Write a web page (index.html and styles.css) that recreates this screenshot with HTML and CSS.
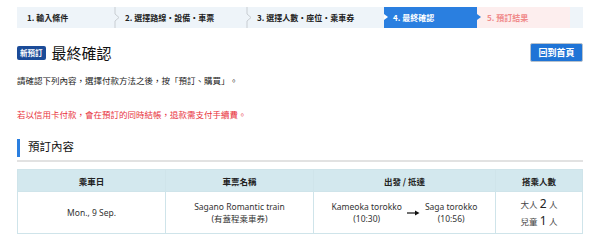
FILE: index.html
```html
<!DOCTYPE html>
<html lang="zh-Hant">
<head>
    <meta charset="UTF-8">
    <title>最終確認</title>
    <link rel="stylesheet" href="styles.css">
</head>
<body>

<div class="page">
    <ol class="steps">
        <li class="step">1. 輸入條件</li>
        <li class="step step-sep">
            <svg class="sep" width="6" height="21" viewBox="0 0 6 21"><path d="M1 0 V7 L5 10.5 L1 14 V21" fill="none" stroke="#c8cdd2" stroke-width="1"/></svg>
            2. 選擇路線・設備・車票
        </li>
        <li class="step step-sep">
            <svg class="sep" width="6" height="21" viewBox="0 0 6 21"><path d="M1 0 V7 L5 10.5 L1 14 V21" fill="none" stroke="#c8cdd2" stroke-width="1"/></svg>
            3. 選擇人數・座位・乘車券
        </li>
        <li class="step current">4. 最終確認</li>
        <li class="step todo">5. 預訂結果</li>
    </ol>

    <div class="title-row">
        <div class="title">
            <span class="badge">新預訂</span>
            <h1>最終確認</h1>
        </div>
        <button class="home-btn">回到首頁</button>
    </div>

    <p class="note">請確認下列內容，選擇付款方法之後，按「預訂、購買」。</p>
    <p class="note warn">若以信用卡付款，會在預訂的同時結帳，退款需支付手續費。</p>

    <h2 class="section">預訂內容</h2>

    <table class="booking">
        <thead>
            <tr>
                <th class="c-date">乘車日</th>
                <th class="c-name">車票名稱</th>
                <th class="c-route">出發 / 抵達</th>
                <th class="c-pax">搭乘人數</th>
            </tr>
        </thead>
        <tbody>
            <tr>
                <td>Mon., 9 Sep.</td>
                <td>Sagano Romantic train<br>(有蓋程乘車券)</td>
                <td>
                    <div class="route">
                        <div>Kameoka torokko<br>(10:30)</div>
                        <svg class="arrow" width="13" height="6" viewBox="0 0 13 6"><path d="M0 3 H9" stroke="#111" stroke-width="1.2"/><path d="M8 0.5 L12.5 3 L8 5.5 Z" fill="#111"/></svg>
                        <div>Saga torokko<br>(10:56)</div>
                    </div>
                </td>
                <td>
                    <div class="pax"><span class="pax-label">大人</span> <b>2</b> <span class="pax-label">人</span></div>
                    <div class="pax"><span class="pax-label">兒童</span> <b>1</b> <span class="pax-label">人</span></div>
                </td>
            </tr>
        </tbody>
    </table>
</div>

</body>
</html>
```

FILE: styles.css
```css
body {
    margin: 0;
    font-family: "Noto Sans", "Noto Sans CJK TC", sans-serif;
    color: #222;
    background: #fff;
}

.page {
    width: 566px;
    padding: 7px 17px 0;
}

/* progress steps */
.steps {
    display: flex;
    list-style: none;
    margin: 0;
    padding: 0;
    height: 21px;
    background-color: #eef4f9;
    font-family: "Noto Sans CJK TC", sans-serif;
    font-size: 8px;
    font-weight: bold;
}

.step {
    position: relative;
    display: flex;
    align-items: center;
    padding-left: 10px;
    color: #222;
}

.step:nth-child(1) { width: 84px; }
.step:nth-child(2) { width: 128px; }
.step:nth-child(3) { width: 137px; }
.step:nth-child(4) { width: 84px; }
.step:nth-child(5) { width: 83px; }

.step-sep {
    padding-left: 4px;
}

.sep {
    margin-left: -1px;
    margin-right: 5px;
}

.step.current {
    background-color: #2a7fe0;
    color: #fff;
    padding-left: 9px;
}

.step.current::before {
    content: "";
    position: absolute;
    left: 0;
    top: 7px;
    border-top: 3.5px solid transparent;
    border-bottom: 3.5px solid transparent;
    border-left: 4px solid #fff;
}

.step.current::after {
    content: "";
    position: absolute;
    right: -4px;
    top: 7px;
    border-top: 3.5px solid transparent;
    border-bottom: 3.5px solid transparent;
    border-left: 4px solid #2a7fe0;
    z-index: 1;
}

.step.todo {
    background-color: #fdeeee;
    color: #f08a8a;
}

/* title */
.title-row {
    display: flex;
    justify-content: space-between;
    align-items: center;
    margin-top: 15px;
    height: 19px;
}

.title {
    display: flex;
    align-items: center;
}

.badge {
    background-color: #1b4b98;
    color: #fff;
    font-family: "Noto Sans CJK TC", sans-serif;
    font-size: 7.5px;
    font-weight: bold;
    padding: 2px 3px;
    line-height: 10px;
    border-radius: 2px;
    margin-right: 6px;
}

h1 {
    margin: 0;
    font-family: "Noto Sans CJK TC", sans-serif;
    font-size: 15px;
    font-weight: normal;
    color: #111;
    line-height: 19px;
}

.home-btn {
    width: 53px;
    height: 19px;
    padding: 0;
    background-color: #1f74d6;
    border: 1px solid #b8c2cc;
    border-radius: 2px;
    color: #fff;
    font-family: "Noto Sans CJK TC", sans-serif;
    font-size: 9px;
    font-weight: bold;
}

.note {
    margin: 12px 0 0;
    font-family: "Noto Sans CJK TC", sans-serif;
    font-size: 8.5px;
    line-height: 12px;
    color: #222;
}

.warn {
    margin-top: 22px;
    color: #e8323c;
}

.section {
    margin: 19px 0 0;
    padding: 0 0 3px 8px;
    border-left: 3px solid #2a7fe0;
    font-family: "Noto Sans CJK TC", sans-serif;
    font-size: 11.5px;
    font-weight: normal;
    line-height: 15px;
    color: #111;
    position: relative;
}

.section::after {
    content: "";
    position: absolute;
    left: -3px;
    right: 0;
    bottom: -5px;
    border-bottom: 2px solid #e2e2e2;
}

/* table */
.booking {
    width: 566px;
    margin-top: 12px;
    border-collapse: collapse;
    font-size: 8.5px;
    text-align: center;
}

.booking th,
.booking td {
    border: 1px solid #cfe4ea;
    padding: 0;
}

.booking th {
    height: 21px;
    background-color: #d3e8ee;
    font-family: "Noto Sans CJK TC", sans-serif;
    font-weight: bold;
    color: #222;
}

.booking td {
    height: 41px;
    line-height: 12px;
    color: #333;
}

.c-date { width: 147px; }
.c-name { width: 147px; }
.c-route { width: 181px; }

.route {
    display: flex;
    justify-content: center;
    align-items: center;
    gap: 5px;
}

.arrow {
    margin-top: 1px;
}

.pax {
    line-height: 16px;
}

.pax-label {
    font-family: "Noto Sans CJK TC", sans-serif;
    color: #444;
}

.pax b {
    font-size: 12px;
    font-weight: normal;
    color: #222;
}
```
